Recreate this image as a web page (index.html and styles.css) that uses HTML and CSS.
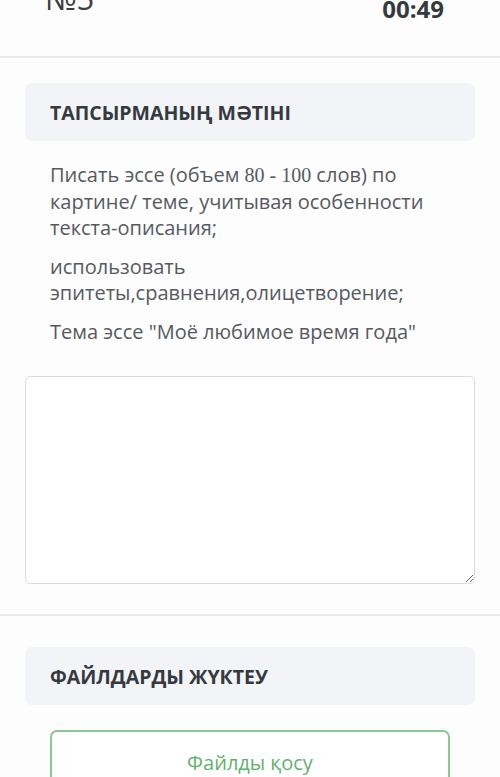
FILE: index.html
```html
<!DOCTYPE html>
<html lang="kk">
<head>
  <meta charset="UTF-8">
  <meta name="viewport" content="width=device-width, initial-scale=1">
  <title>Тапсырма №5</title>
  <link rel="stylesheet" href="styles.css">
</head>
<body>

  <header class="top">
    <div class="task-no">№5</div>
    <div class="timer">00:49</div>
  </header>

  <section class="block">
    <div class="block-title">ТАПСЫРМАНЫҢ МӘТІНІ</div>
    <div class="task-text">
      <p>Писать эссе (объем <span class="num">80 - 100</span> слов) по картине/ теме, учитывая особенности текста-описания;</p>
      <p>использовать эпитеты,сравнения,олицетворение;</p>
      <p>Тема эссе "Моё любимое время года"</p>
    </div>
    <textarea class="answer"></textarea>
  </section>

  <section class="block">
    <div class="block-title">ФАЙЛДАРДЫ ЖҮКТЕУ</div>
    <button class="add-file">Файлды қосу</button>
  </section>

</body>
</html>
```

FILE: styles.css
```css
body {
  font-family: "Open Sans", "Noto Sans", sans-serif;
  margin: 0;
  padding: 0;
  background-color: #fdfdfd;
  color: #343a40;
}

.top {
  display: flex;
  justify-content: space-between;
  align-items: flex-start;
  margin-top: -22px;
  padding: 0 56px 0 45px;
  height: 78px;
  border-bottom: 2px solid #e9e9e9;
}

.task-no {
  font-size: 31px;
  line-height: 40px;
  color: #3a3f45;
}

.timer {
  font-size: 24px;
  font-weight: bold;
  line-height: 40px;
  margin-top: 11px;
}

.block {
  padding: 25px 25px 30px;
  border-bottom: 2px solid #e9e9e9;
}

.block + .block {
  padding-top: 31px;
  border-bottom: none;
}

.block-title {
  background-color: #f3f4f8;
  border-radius: 7px;
  height: 58px;
  display: flex;
  align-items: center;
  padding: 0 25px;
  font-size: 19.5px;
  font-weight: bold;
  color: #343a40;
}

.task-text {
  padding: 21px 25px 0;
  font-size: 20px;
  line-height: 26.5px;
  color: #555a60;
}

.task-text p {
  margin: 0 0 12px;
}

.task-text .num {
  font-family: "Liberation Serif", serif;
}

.answer {
  display: block;
  box-sizing: border-box;
  width: 100%;
  height: 208px;
  margin-top: 31px;
  border: 1px solid #dcdcdc;
  border-radius: 5px;
  background-color: white;
}

.add-file {
  display: block;
  box-sizing: border-box;
  width: 400px;
  height: 64px;
  margin: 25px auto 0;
  background: white;
  border: 2px solid #8cc596;
  border-radius: 7px;
  font-family: inherit;
  font-size: 20px;
  color: #5fb36d;
  cursor: pointer;
}
```
